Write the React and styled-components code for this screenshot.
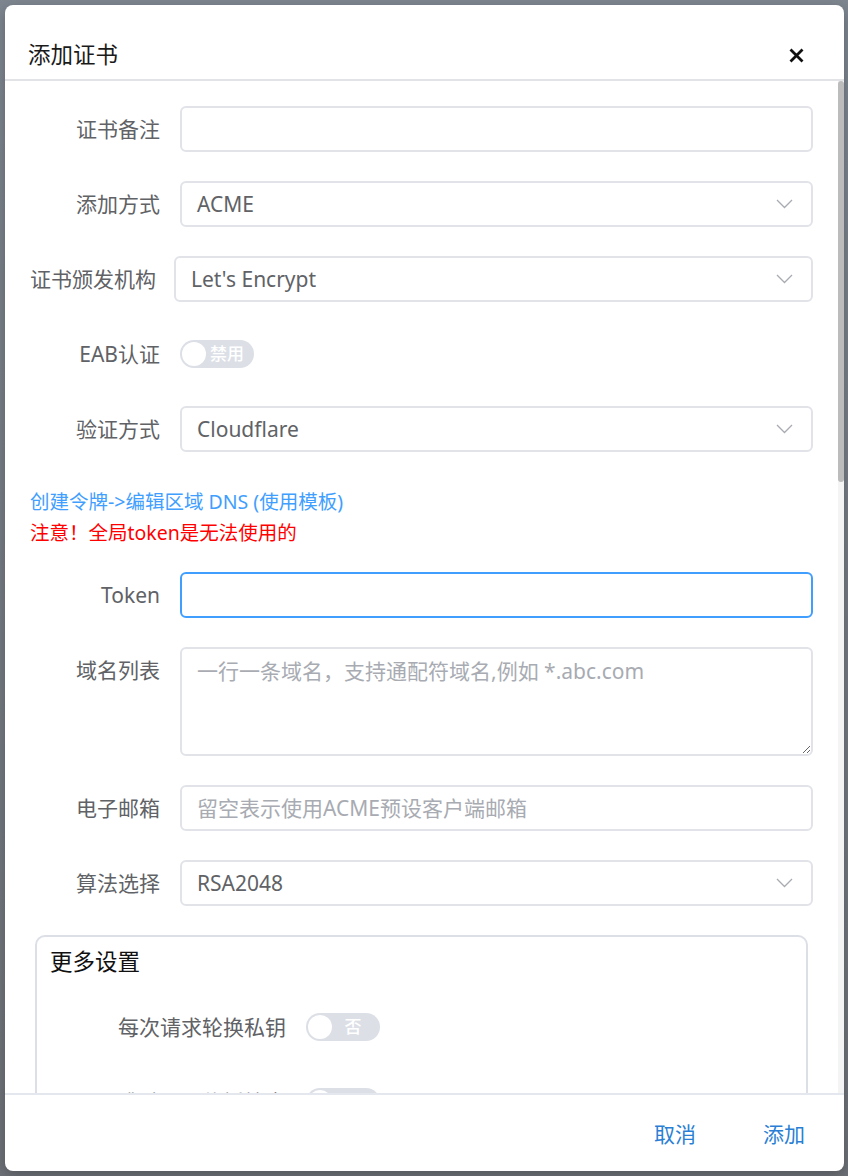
import React from 'react';
import styled, { createGlobalStyle } from 'styled-components';

const GlobalStyle = createGlobalStyle`
	html, body {
		margin: 0;
		padding: 0;
	}
	body {
		background: #787f88;
		font-family: "Noto Sans", "Noto Sans CJK SC", sans-serif;
		overflow: hidden;
	}
`;

const Backdrop = styled.div`
	height: 1176px;
	box-sizing: border-box;
	padding: 5px 4px 5px 5px;
	background: linear-gradient(#7e8690, #6e7278);
`;

const Dialog = styled.div`
	width: 839px;
	height: 1166px;
	background: #fff;
	border-radius: 8px;
	display: flex;
	flex-direction: column;
	overflow: hidden;
	box-shadow: 0 4px 14px rgba(0, 0, 0, 0.25);
`;

const Header = styled.div`
	display: flex;
	justify-content: space-between;
	align-items: center;
	padding: 35px 38px 9px 23px;
	border-bottom: 2px solid #e2e3e6;
	flex-shrink: 0;
`;

const Title = styled.h2`
	margin: 0;
	font-size: 22.5px;
	line-height: 30px;
	font-weight: 400;
	color: #1a1a1a;
`;

const Close = styled.button`
	width: 20px;
	height: 20px;
	padding: 0;
	border: none;
	background: none;
	display: flex;
	align-items: center;
	justify-content: center;
	cursor: pointer;
`;

const BodyWrap = styled.div`
	flex: 1;
	min-height: 0;
	display: flex;
`;

const Body = styled.div`
	flex: 1;
	min-width: 0;
	overflow: hidden;
	padding: 25px;
`;

const Rail = styled.div`
	width: 6px;
	flex-shrink: 0;
	background: #f4f4f4;
`;

const Thumb = styled.div`
	height: 401px;
	border-radius: 3px;
	background: #bcbcbc;
`;

const Item = styled.div`
	display: flex;
	align-items: flex-start;
	margin-bottom: 29px;
`;

const Label = styled.label`
	flex-shrink: 0;
	width: ${({ $w }) => $w || 150}px;
	box-sizing: border-box;
	padding-right: 20px;
	text-align: right;
	font-size: 21px;
	line-height: 46px;
	color: #606266;
	white-space: nowrap;
`;

const Control = styled.div`
	flex: 1;
	min-width: 0;
`;

const Input = styled.input`
	display: block;
	width: 100%;
	height: 46px;
	box-sizing: border-box;
	border: 2px solid ${({ $focus }) => ($focus ? '#409eff' : '#e1e3e9')};
	border-radius: 6px;
	padding: 0 15px;
	font-family: inherit;
	font-size: 21px;
	color: #606266;
	outline: none;
	background: #fff;

	&::placeholder {
		color: #a8abb2;
	}
`;

const TextArea = styled.textarea`
	display: block;
	width: 100%;
	height: ${({ $h }) => $h || 109}px;
	box-sizing: border-box;
	border: 2px solid #e1e3e9;
	border-radius: 6px;
	padding: 7px 15px;
	font-family: inherit;
	font-size: 21px;
	line-height: 1.5;
	color: #606266;
	outline: none;
	resize: vertical;

	&::placeholder {
		color: #a8abb2;
	}
`;

const SelectBox = styled.div`
	height: 46px;
	box-sizing: border-box;
	border: 2px solid #e1e3e9;
	border-radius: 6px;
	padding: 0 18px 0 15px;
	display: flex;
	align-items: center;
	justify-content: space-between;
	font-size: 21px;
	color: #606266;
`;

const SwitchTrack = styled.span`
	margin-top: 9px;
	width: 74px;
	height: 28px;
	border-radius: 14px;
	background: ${({ $on }) => ($on ? '#409eff' : '#dcdfe6')};
	display: inline-flex;
	align-items: center;
`;

const Knob = styled.span`
	width: 24px;
	height: 24px;
	margin-left: 2px;
	border-radius: 50%;
	background: #fff;
	flex-shrink: 0;
`;

const SwitchText = styled.span`
	flex: 1;
	text-align: center;
	padding-right: 6px;
	font-size: 17px;
	font-weight: 500;
	color: #fff;
	line-height: 28px;
`;

/* top margin collapses with the form item's 29px */
const Tip = styled.div`
	margin: 34px 0 24px;
	font-size: 19.5px;
	line-height: 31px;
`;

const TipLink = styled.a`
	display: block;
	color: #409eff;
	text-decoration: none;
`;

const TipWarn = styled.div`
	color: #ff0000;
`;

const Group = styled.div`
	margin: 0 5px;
	border: 2px solid #dcdfe6;
	border-radius: 10px;
	padding: 10px 13px 1px;
`;

const GroupTitle = styled.div`
	font-size: 22.5px;
	line-height: 30px;
	color: #111;
	margin-bottom: 27px;
`;

const Footer = styled.div`
	flex-shrink: 0;
	height: 76px;
	border-top: 2px solid #e4e7ed;
	display: flex;
	justify-content: flex-end;
	align-items: center;
	gap: 67px;
	padding-right: 39px;
`;

const TextButton = styled.button`
	border: none;
	background: none;
	padding: 0;
	font-family: inherit;
	font-size: 21px;
	color: #2a7fd5;
	cursor: pointer;
`;

const Chevron = () => (
	<svg width="17" height="10" viewBox="0 0 17 10" fill="none">
		<path d="M1 1l7.5 7.5L16 1" stroke="#a8abb2" strokeWidth="1.3" />
	</svg>
);

const Select = ({ value }) => (
	<SelectBox>
		<span>{value}</span>
		<Chevron />
	</SelectBox>
);

const Switch = ({ text }) => (
	<SwitchTrack>
		<Knob />
		<SwitchText>{text}</SwitchText>
	</SwitchTrack>
);

const Row = ({ label, w, children }) => (
	<Item>
		<Label $w={w}>{label}</Label>
		<Control>{children}</Control>
	</Item>
);

const advanced = [
	{ label: '每次请求轮换私钥', text: '否' },
	{ label: '跳过DNS传播检查', text: '否' },
	{ label: '使用代理', text: '否' },
];

const App = () => {
	return (
		<>
			<GlobalStyle />
			<Backdrop>
				<Dialog>
					<Header>
						<Title>添加证书</Title>
						<Close aria-label="关闭">
							<svg width="15" height="15" viewBox="0 0 15 15">
								<path d="M1.5 1.5l12 12M13.5 1.5l-12 12" stroke="#111" strokeWidth="2.8" />
							</svg>
						</Close>
					</Header>
					<BodyWrap>
						<Body>
							<Row label="证书备注">
								<Input />
							</Row>
							<Row label="添加方式">
								<Select value="ACME" />
							</Row>
							<Row label="证书颁发机构" w={144}>
								<Select value="Let's Encrypt" />
							</Row>
							<Row label="EAB认证">
								<Switch text="禁用" />
							</Row>
							<Row label="验证方式">
								<Select value="Cloudflare" />
							</Row>
							<Tip>
								<TipLink href="#">创建令牌-&gt;编辑区域 DNS (使用模板)</TipLink>
								<TipWarn>注意！全局token是无法使用的</TipWarn>
							</Tip>
							<Row label="Token">
								<Input $focus />
							</Row>
							<Row label="域名列表">
								<TextArea placeholder="一行一条域名，支持通配符域名,例如 *.abc.com" />
							</Row>
							<Row label="电子邮箱">
								<Input placeholder="留空表示使用ACME预设客户端邮箱" />
							</Row>
							<Row label="算法选择">
								<Select value="RSA2048" />
							</Row>
							<Group>
								<GroupTitle>更多设置</GroupTitle>
								{advanced.map((f) => (
									<Row key={f.label} label={f.label} w={256}>
										<Switch text={f.text} />
									</Row>
								))}
							</Group>
						</Body>
						<Rail>
							<Thumb />
						</Rail>
					</BodyWrap>
					<Footer>
						<TextButton>取消</TextButton>
						<TextButton>添加</TextButton>
					</Footer>
				</Dialog>
			</Backdrop>
		</>
	);
};

export default App;
